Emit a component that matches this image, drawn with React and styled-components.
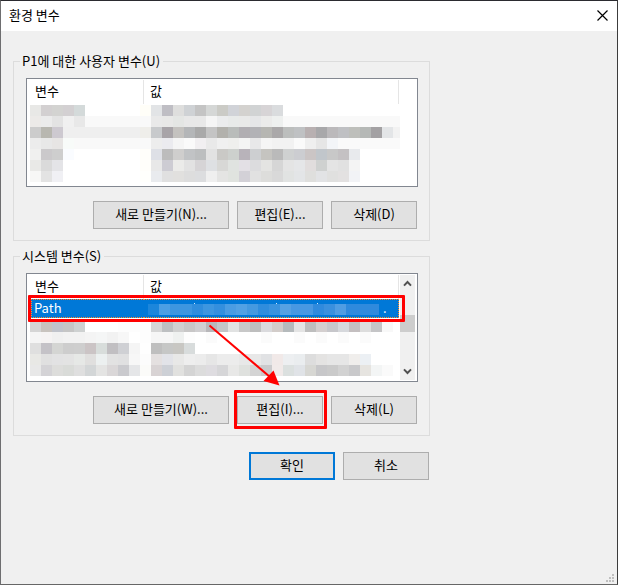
import React, { useState } from "react";
import styled, { createGlobalStyle, css } from "styled-components";

const CELL = 11;

// one string per row, "-" is an empty cell, "*n" repeats the colour
const userCells = [
  "e8e8e6 d3d0d1 d3d3d1 d3d0d2 d4dada -*5 fffef8 e2e4e6 bfbec4 dededd cfd2d5 c4c4c4 d5d7d6 cbcbc6 d1d3d8 d4d2cf d1d3d4 d7d4d6 dadcde",
  "eceae8 ebebeb e3e3e3 f0f0f0 e8e8e8 f9f9f9*6 e9e9e9 e8e8e7 e4e6e4 e8e8e8*2 f5f5f5 ebeced e8eae9 e9e9e8 e5e6e8 ebebea eef0ef f9f9f9*11",
  "cccccc b8b7b0 cdc9d0 efefef*7 efeeea c8cacc a8a4a8 c4c2bf b4b6b8 a9a9a9 c4c4c4 b2b1ac b9bcba b1aeb2 b2b2b6 b6b6b2 aaa8a9 bcbebd bfc1c3 b8b0b1 a8a8aa bbb9bb bfc0c3 bebfbb b5b8b6 a3a1a3 e3e5e7 f2f2f2",
  "ececec e8e8e8 e7e5e4 f8fbf9 f9f9f9*7 ededed ebebef f5f5f5 fafafa f1eff1 e9e9e9 f0f0f0 efefed f4f4f4 e8e8e9 f5f5f5 f2f2f2*2 fafafa efefef e6e6e6 f3f5f8 fafafa*6",
  "f0f0ef cbc9cb cecece fafcff -*6 fffefa dee0e6 bcbcbc cfcecd c1c3c5 bcbebf e2e2e2 cac9c6 cdd0cd b8b3ba cdcfd1 c5c4c0 bababa cfd1d1 cccdd1 cbc5c5 c1c6cb c8c8c8 c4c1c3 e8eaed",
  "e9e9e7 dadada e4e4e7 -*7 fffefa e8e8e8 cdccd3 ebebe9 e2e2e2 d6d4d6 dee0e3 d8d8d6 e0e3e0 e3e0e5 dcdcde e4e4e2 d6d6d6 e4e4e4 e5e6e8 e1dddd cfd1d0 e4e4e4 e1e1e1 f4f4f4",
  "f7f7f6 e3e3e3 f0f0f4 -*7 fffffc e9ebee e0e0e0 e1e0de dddddd dcdddf efefef e4e4e3 e0e3df d3d1d7 e1e1e1 dddddb d9d9d9 e1e3e2 e3e5e7 dfdfdd e2e3e5 e0e0df e3e1e1 f2f3f6",
];

const systemCells = [
  "d5d5d5 c8c3be c0c3cb c5c5c5 ced1d1 -*3 fdfdfd*3 d6d6d6 bdbfc1 d0d0d0 c8c7c7 d0cfd1 b8b7ba c3c5c8 e1e2e2 c8c8c8 bebebe dadadd d3cdca b5babc e4e4e4 bebebe d4cfcf c7c7cb d6d8dc c4bfc0 dddddd c5c5c7 f8f8f8",
  "f5f5f5 f5f3f3 f0f0f0 f2f2f2*2 f4f4f4 f5f6f6 f2f2f2 f7f7f7 - fdfdfd f6f6f6*2 eff1f0 fdfdfd - fbfbfb -*4 fbfbfb -*2 fbfbfb - fbfbfb - fbfbfb - fbfbfb",
  "dfdfdf c4c2c7 d4d5d3 cdcdcd cecece cbc4c5 d8dddb c1bfc2 cfd0d4 f5f5f5 fefefe bfbfbf c6c7c6 c8c7c3 d8dcdc",
  "e8e8e5 e0e0e0 e2e2e3 e3e3e3 e6e8e6 e0dfde ecf0f0 e2e2e2 e0e0e1 f7f7f7 fcfcfc e4e0e0 e2e3e8 e8e8e7 eeeeee ececec e6e6e6 ececec*2 e8e8e8*2 e1e2e4 f1e9e8 edeff1 eaedef dddddd e4e3e2 e6e6e6*2 f0eeec ecf0f4",
  "e8e8e8 d4d3d6 dddddb d9dbd8 dfdfdf d3d6d7 e4e4e3 dad7d8 cacace e5e6e8 fbfbf9 d8d3d4 cdd0d6 e1e1df d4d4d4 dcdcdc dedce0 d6d6d8 e8e8e7 dfe1de d4d4d4 cacacc f1eae9 dbe0df e0e3e7 d7d7d3 c7c7c9 cacaca d2d2d2 c9c9cb e6e4e0 f3f5f5 fafafa",
];

const pathCells = [
  "1c86db 4c9fe4 3d96e0*2 2f8ddd 3d96e0 348fde 4a9ce3 52a1e4 4499e0 2f8ddd 3a93df 56a1e3 4898e2*2 2f8add 3a90de 4f9de3 2f8add*3",
];

const expand = (row) =>
  row.split(" ").flatMap((item) => {
    const [color, count] = item.split("*");
    return Array(Number(count || 1)).fill(color);
  });

const Mosaic = ({ rows, width }) => (
  <MosaicSvg
    width={width}
    height={rows.length * CELL}
    shapeRendering="crispEdges"
    aria-hidden="true"
  >
    {rows.map((row, y) =>
      expand(row).map((color, x) =>
        color === "-" ? null : (
          <rect
            key={`${x}-${y}`}
            x={x * CELL}
            y={y * CELL}
            width={CELL}
            height={CELL}
            fill={`#${color}`}
          />
        )
      )
    )}
  </MosaicSvg>
);

const Specks = () => (
  <SpeckSvg width="130" height="2" fill="#cfe6f9" aria-hidden="true">
    <path d="M0 0h1v1h-1zM82 0h1v1h-1zM123 0h1v1h-1z" />
  </SpeckSvg>
);

const Head = () => (
  <thead>
    <tr>
      <Th $width="117px">
        <HeadLabel>변수</HeadLabel>
      </Th>
      <Th>
        <HeadLabel $indent>값</HeadLabel>
      </Th>
    </tr>
  </thead>
);

const ScrollBar = () => (
  <Scroll>
    <ScrollButton type="button" aria-label="위로">
      <svg width="9" height="7" viewBox="0 0 9 7">
        <path d="M1 5.6 4.5 2 8 5.6" />
      </svg>
    </ScrollButton>
    <Thumb />
    <ScrollButton type="button" aria-label="아래로">
      <svg width="9" height="7" viewBox="0 0 9 7">
        <path d="M1 1.4 4.5 5 8 1.4" />
      </svg>
    </ScrollButton>
  </Scroll>
);

const App = () => {
  const [open, setOpen] = useState(true);

  if (!open) {
    return <GlobalStyle />;
  }

  return (
    <>
      <GlobalStyle />
      <Window>
        <TitleBar>
          <Title>환경 변수</Title>
          <CloseButton
            type="button"
            aria-label="닫기"
            onClick={() => setOpen(false)}
          >
            <svg width="11" height="11" viewBox="0 0 11 11">
              <path d="M.5.5l10 10M10.5.5l-10 10" stroke="#000" strokeWidth="1.2" />
            </svg>
          </CloseButton>
        </TitleBar>

        <Content>
          <Group>
            <Legend>P1에 대한 사용자 변수(U)</Legend>
            <ListBox>
              <Table>
                <Head />
                <tbody>
                  <tr>
                    <MosaicCell colSpan={2} $top="1px">
                      <Mosaic rows={userCells} width={370} />
                    </MosaicCell>
                  </tr>
                </tbody>
              </Table>
            </ListBox>
            <Actions>
              <Button type="button" $wide>
                새로 만들기(N)...
              </Button>
              <Button type="button">편집(E)...</Button>
              <Button type="button">삭제(D)</Button>
            </Actions>
          </Group>

          <Group>
            <Legend>시스템 변수(S)</Legend>
            <ListBox>
              <Table>
                <Head />
                <tbody>
                  <SelectedRow aria-selected="true">
                    <NameCell>
                      <Fill $side="left">Path</Fill>
                    </NameCell>
                    <td>
                      <Fill $side="right">
                        <Mosaic rows={pathCells} width={231} />
                        <Specks />
                        <span>.</span>
                      </Fill>
                    </td>
                  </SelectedRow>
                  <tr>
                    <MosaicCell colSpan={2} $top="3px">
                      <Mosaic rows={systemCells} width={370} />
                    </MosaicCell>
                  </tr>
                </tbody>
              </Table>
              <ScrollBar />
              <Arrow width="76" height="64" viewBox="0 0 76 64" aria-hidden="true">
                <path d="M2.5 1.5 63 53" stroke="#f00" strokeWidth="2" />
                <path d="M72.5 61.5 56.5 57 66.5 46.5z" fill="#f00" />
              </Arrow>
            </ListBox>
            <Actions>
              <Button type="button" $wide>
                새로 만들기(W)...
              </Button>
              <Button type="button" $marked>
                편집(I)...
              </Button>
              <Button type="button">삭제(L)</Button>
            </Actions>
          </Group>

          <Footer>
            <Button type="button" $primary>
              확인
            </Button>
            <Button type="button">취소</Button>
          </Footer>
        </Content>

        <Grip width="8" height="8" fill="#bfbfbf" aria-hidden="true">
          <path d="M6 0h2v2h-2zM3 3h2v2h-2zM6 3h2v2h-2zM0 6h2v2h-2zM3 6h2v2h-2zM6 6h2v2h-2z" />
        </Grip>
      </Window>
    </>
  );
};

export default App;

const GlobalStyle = createGlobalStyle`
  * {
    box-sizing: border-box;
  }

  body {
    margin: 0;
    color: #000;
    font-family: "Noto Sans CJK KR", sans-serif;
    font-size: 13px;
    line-height: 17px;
  }

  button {
    font: inherit;
    color: inherit;
  }
`;

const Window = styled.main`
  display: flex;
  flex-direction: column;
  min-height: 100vh;
  background: #f0f0f0;
  border: 1px solid;
  border-color: #2b2b30 #3c3c3c #666 #6e6e70;
`;

const TitleBar = styled.header`
  display: flex;
  align-items: flex-start;
  justify-content: space-between;
  height: 30px;
  padding-left: 8px;
  background: #fff;
`;

const Title = styled.h1`
  margin: 0;
  font-size: 13px;
  font-weight: 400;
  line-height: 27px;
`;

const CloseButton = styled.button`
  display: flex;
  align-items: center;
  justify-content: center;
  width: 29px;
  height: 29px;
  padding: 0;
  border: none;
  background: none;
`;

const Content = styled.div`
  display: flex;
  flex-direction: column;
  gap: 6px;
  max-width: 429px;
  padding: 21px 0 0 12px;
`;

const Group = styled.fieldset`
  min-width: 0;
  margin: 0;
  padding: 7px 11px 11px 12px;
  border: 1px solid #dcdcdc;
`;

const Legend = styled.legend`
  height: 19px;
  margin-left: -6px;
  padding: 0 3px 0 2px;
`;

const ListBox = styled.div`
  position: relative;
  display: flex;
  height: 109px;
  background: #fff;
  border: 1px solid #828790;
`;

const Table = styled.table`
  width: 372px;
  height: max-content;
  table-layout: fixed;
  border-collapse: collapse;

  td {
    padding: 0;
  }
`;

const Th = styled.th`
  width: ${({ $width }) => $width || "auto"};
  padding: 1px 0 0;
  font-weight: 400;
  text-align: left;
`;

const HeadLabel = styled.div`
  height: 24px;
  padding-left: ${({ $indent }) => ($indent ? "6px" : "8px")};
  border-right: 1px solid #e5e5e5;
  line-height: 22px;
`;

const MosaicCell = styled.td`
  && {
    padding: ${({ $top }) => $top} 0 0 3px;
  }
`;

const MosaicSvg = styled.svg`
  display: block;
  flex: none;
`;

const redFrame = css`
  content: "";
  position: absolute;
  z-index: 1;
  border: 3px solid #f00;
  border-radius: 1px;
  pointer-events: none;
`;

const SelectedRow = styled.tr`
  position: relative;
  color: #fff;
`;

const NameCell = styled.td`
  && {
    padding-left: 4px;
  }

  &::after {
    ${redFrame}
    inset: -4px -6px -4px 1px;
  }
`;

const Fill = styled.div`
  position: relative;
  display: flex;
  gap: 4px;
  height: 19px;
  padding-left: ${({ $side }) => ($side === "left" ? "2px" : "4px")};
  background: #0078d7;
  border: 1px dotted #ff8728;
  border-${({ $side }) => ($side === "left" ? "right" : "left")}: none;
  line-height: 15px;

  ${MosaicSvg} {
    margin-top: 4px;
  }
`;

const SpeckSvg = styled.svg`
  position: absolute;
  top: 3px;
  left: 50px;
`;

const Scroll = styled.div`
  display: flex;
  flex-direction: column;
  justify-content: space-between;
  width: 15px;
  margin: 1px 0 1px 1px;
  background: #f0f0f0;
`;

const ScrollButton = styled.button`
  display: flex;
  align-items: center;
  justify-content: center;
  height: 17px;
  padding: 0;
  border: none;
  background: none;

  path {
    fill: none;
    stroke: #505050;
    stroke-width: 2;
  }
`;

const Thumb = styled.div`
  height: 17px;
  margin-bottom: 8px;
  background: #cdcdcd;
`;

const Arrow = styled.svg`
  position: absolute;
  z-index: 1;
  top: 50px;
  left: 180px;
  pointer-events: none;
`;

const Actions = styled.div`
  display: flex;
  justify-content: flex-end;
  gap: 8px;
  padding: 14px 1px 0 0;
`;

const Button = styled.button`
  position: relative;
  width: ${({ $wide }) => ($wide ? "136px" : "86px")};
  height: 28px;
  padding: 0 0 3px;
  background: #e1e1e1;
  border: ${({ $primary }) =>
    $primary ? "2px solid #0078d7" : "1px solid #adadad"};

  ${({ $marked }) =>
    $marked &&
    css`
      &::after {
        ${redFrame}
        inset: -7px -5px -6px -4px;
      }
    `}
`;

const Footer = styled.footer`
  display: flex;
  justify-content: flex-end;
  gap: 8px;
  padding: 10px 1px 0 0;
`;

const Grip = styled.svg`
  align-self: flex-end;
  margin: auto 3px 2px 0;
`;
